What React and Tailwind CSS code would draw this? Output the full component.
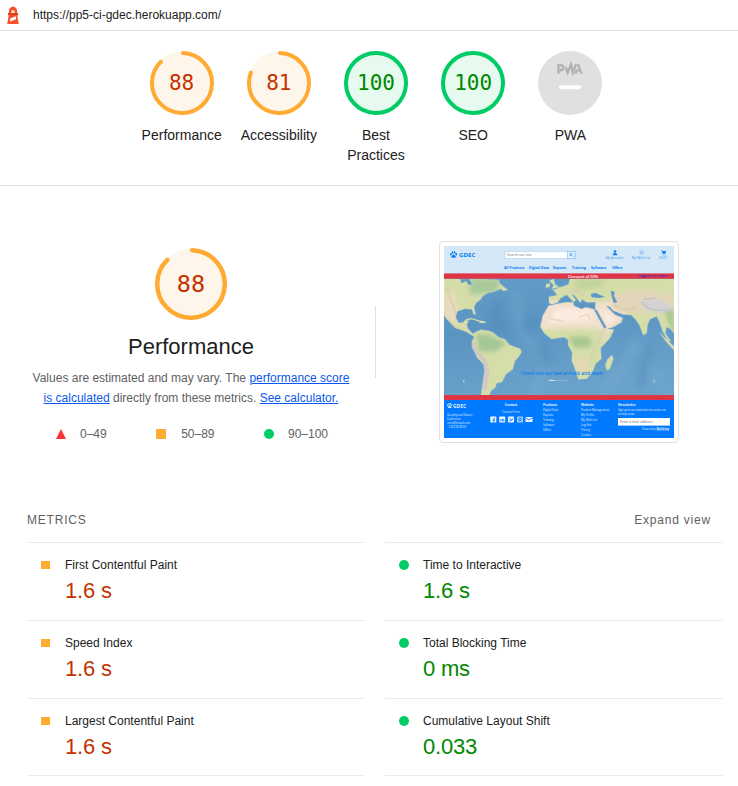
const SCORES = [
  { score: 88, label: "Performance", tone: "average" },
  { score: 81, label: "Accessibility", tone: "average" },
  { score: 100, label: "Best Practices", tone: "pass" },
  { score: 100, label: "SEO", tone: "pass" },
];

const TONES = {
  average: { ring: "#ffaa33", fill: "#fff6eb", text: "text-[#c33300]" },
  pass: { ring: "#00cc66", fill: "#e6faf0", text: "text-[#008800]" },
};

const METRICS = [
  ["First Contentful Paint", "1.6 s", "average"],
  ["Time to Interactive", "1.6 s", "pass"],
  ["Speed Index", "1.6 s", "average"],
  ["Total Blocking Time", "0 ms", "pass"],
  ["Largest Contentful Paint", "1.6 s", "average"],
  ["Cumulative Layout Shift", "0.033", "pass"],
];

function Gauge({ score, tone, size, stroke, textClass }) {
  const t = TONES[tone];
  const r = size / 2 - stroke / 2;
  const c = 2 * Math.PI * r;
  const arc = score === 100 ? c : (c * score) / 100 - stroke / 2;
  return (
    <div className="grid place-items-center">
      <svg width={size} height={size} className="col-start-1 row-start-1">
        <circle cx={size / 2} cy={size / 2} r={size / 2 - 0.5} fill={t.fill} />
        <circle
          cx={size / 2}
          cy={size / 2}
          r={r}
          fill="none"
          stroke={t.ring}
          strokeWidth={stroke}
          strokeLinecap="round"
          strokeDasharray={`${arc} ${score === 100 ? 0 : c}`}
          transform={`rotate(-88 ${size / 2} ${size / 2})`}
        />
      </svg>
      <span className={`col-start-1 row-start-1 leading-none font-['DejaVu_Sans_Mono',monospace] ${t.text} ${textClass}`}>
        {score}
      </span>
    </div>
  );
}

function Lighthouse() {
  return (
    <svg width="12" height="18" viewBox="0 0 12 18">
      <path d="M2 4.4Q2.6 1 6 .6 9.4 1 10 4.4V7h1v2.2h-.8L11.8 18H.2L1.8 9.2H1V7h1z" fill="#f4502a" />
      <path d="M4.3 4.4h3.4V7H4.3z" fill="#ffe9b8" />
      <path d="M3.2 12.6 8.8 10.2l.2 3-6.2 2.6z" fill="#fff" />
      <path d="M1 7.2h10v1.7H1z" fill="#dd3a1c" />
    </svg>
  );
}

function PwaBadge() {
  return (
    <svg width="64" height="64">
      <circle cx="32" cy="32" r="32" fill="#e0e0e0" />
      <g fill="none" stroke="#b3b3b3" strokeWidth="2.4">
        <path d="M20.4 22.7V14.2h2.3a2.5 2.5 0 0 1 0 5h-2" />
        <path d="M27.6 16 29.6 21.6 33 13.4 34.8 21.6 38.2 13" />
        <path d="M37.4 22.7 38.6 19.6h3.6M40 13.2 43.6 22.9" />
      </g>
      <path d="M23 36.2h18" stroke="#fff" strokeWidth="4" strokeLinecap="round" />
    </svg>
  );
}

function Paw({ x, y, fill }) {
  return (
    <g transform={`translate(${x} ${y})`} fill={fill}>
      <ellipse cx="1" cy="3" rx=".9" ry="1.2" />
      <ellipse cx="2.6" cy="1.2" rx=".8" ry="1.2" />
      <ellipse cx="4.6" cy="1.2" rx=".8" ry="1.2" />
      <ellipse cx="6.2" cy="3" rx=".9" ry="1.2" />
      <path d="M3.6 3 6 5.5Q6 7 3.6 6.3 1 7 1.2 5.5z" />
    </g>
  );
}

const FOOTER = [
  [99, "Products", ["Digital Data", "Reports", "Training", "Software", "Offers"]],
  [137, "Website", ["Product Management", "My Profile", "My Wish List", "Log Out", "Privacy", "Cookies"]],
];

function SitePreview() {
  return (
    <svg width="230" height="192" viewBox="0 0 230 192" className="block font-['Open_Sans',sans-serif]">
      <defs>
        <filter id="soft" x="-5%" y="-5%" width="110%" height="110%">
          <feGaussianBlur stdDeviation="1.6" />
        </filter>
        <filter id="haze" x="-20%" y="-20%" width="140%" height="140%">
          <feGaussianBlur stdDeviation="7" />
        </filter>
        <filter id="swell" x="-20%" y="-20%" width="140%" height="140%">
          <feGaussianBlur stdDeviation="13" />
        </filter>
        <clipPath id="land">
          <path id="landShape" d="M12 27H120L175 29 181 42 203 60 190 62 182 56 160 66 145 68 128 78 122 88 108 99 102 112 107 134 100 131 96 118 75 116 52 124 47 143 56 158 68 158 76 150 86 152 80 164 84 176 98 191 112 184 123 179 148 183 160 188 176 202 195 208 209 225 240 236 245 246 235 262 225 272 218 298 198 313 186 336 170 340 165 354 155 360 148 376H123L128 342 134 301 130 282 112 263 96 232 95 216 103 200 80 186 67 181 46 174 31 158 18 145 12 135zM308 138 326 107 352 101 380 97 400 97 402 107 424 117 438 112 462 118 476 146 492 175 522 179 510 204 482 234 484 266 467 281 458 305 440 326 415 328 407 302 395 271 397 248 384 224 385 210 372 201 335 207 313 190 301 170zM516 256 520 266 509 298 500 300 496 285 503 267zM327 98 327 80 351 76 346 67 339 60 360 52 385 44 390 27H702V190L690 176 679 171 676 190 692 214 684 213 668 184 660 160 650 139 630 148 623 163 620 190 610 195 597 163 585 146 573 135 548 133 520 122 510 110 498 107 525 134 548 144 544 157 522 170 498 178 482 151 466 121 466 97 440 97 426 88 421 98 412 86 402 75 395 72 408 91 400 95 380 74 362 84 352 98 335 103zM328 32 341 27 345 43 358 52 335 56 341 45zM318 43 330 40 329 50 318 53zM660 188 702 230V240L676 212z" />
        </clipPath>
        <linearGradient id="sea" x1="0" y1="0" x2=".3" y2="1">
          <stop offset="0" stopColor="#659dc7" />
          <stop offset=".45" stopColor="#5a94c1" />
          <stop offset="1" stopColor="#6aa2cb" />
        </linearGradient>
      </defs>
      <rect width="230" height="192" fill="#d5e8f7" />

      <g transform="translate(-4 24) scale(.33333)">
        <rect x="12" y="24" width="702" height="354" fill="url(#sea)" />
        <g filter="url(#swell)" fill="none" strokeWidth="24" opacity=".45">
          <path d="M225 70Q235 120 235 155T290 240T275 376M490 376Q530 310 560 270T575 205L620 280 690 376" stroke="#7aadd0" />
          <path d="M180 90 160 150 195 180M300 220 325 285M250 180 280 145M625 230 600 350" stroke="#4a83b3" />
        </g>
        <use href="#landShape" stroke="#8fbfdc" strokeWidth="5" fill="none" opacity=".35" filter="url(#soft)" />
        <g clipPath="url(#land)" filter="url(#soft)">
          <rect x="12" y="24" width="702" height="354" fill="#d5dda9" />
          <g filter="url(#haze)">
            <path d="M300 90 470 100 530 90 565 140 500 185 465 175 300 177z" fill="#f1e0cd" />
            <path d="M345 115 450 120 460 150 330 160z" fill="#fbece0" />
            <path d="M480 110 530 150 505 170z" fill="#faebdd" />
            <path d="M510 75 600 60 702 75V100L610 130 520 120z" fill="#e3d5b9" />
            <path d="M600 92 650 88 702 110 680 130 620 118z" fill="#d3d1d6" />
            <path d="M110 190 150 195 200 220 165 245 115 245z" fill="#a5c795" />
            <path d="M385 200 450 200 455 230 405 235z" fill="#a9c890" />
            <path d="M90 25 180 27 170 65 90 75z" fill="#a9c99b" />
            <path d="M12 70 40 65 60 130 50 165 12 140z" fill="#e8dabd" />
            <path d="M410 25 500 25 480 55 400 60z" fill="#c1d49b" />
            <path d="M405 270 440 265 450 300 415 310z" fill="#e7d7b4" />
            <path d="M675 120 702 120V210z" fill="#a6c78d" />
            <path d="M485 180 520 178 495 225z" fill="#e9dbbb" />
          </g>
          <path d="M98 215 107 245 134 272 143 300 134 360" stroke="#d4c8c4" strokeWidth="12" fill="none" />
          <path d="M23 40 25 75 42 110 50 145M492 180 475 215 450 265M520 105 550 120 590 115M385 65 415 62 430 78" stroke="#dacab0" strokeWidth="6" fill="none" opacity=".7" />
          <path d="M603 95 625 115 650 120 690 124M610 88 645 84" stroke="#c2c1ca" strokeWidth="4" fill="none" />
          <path d="M416 142 443 133 452 150M330 145 370 155" stroke="#eed8c6" strokeWidth="5" fill="none" />
        </g>
        <g filter="url(#soft)" fill="#5f99c4">
          <path d="M512 62 524 65 522 78 532 97 521 99 516 82zM452 72 466 68 475 73 494 80 478 84 455 82zM60 28 87 27 96 42 86 45 79 33 65 40z" />
          <path d="M467 120 497 173" stroke="#5f99c4" strokeWidth="5" />
        </g>
        <path d="M78 149Q98 143 111 151L137 157M118 158 137 158" stroke="#d6ddb0" strokeWidth="4" fill="none" filter="url(#soft)" />
      </g>

      <rect y="27.4" width="230" height="5.3" fill="#df3547" />
      <rect y="149" width="230" height="5.5" fill="#df3547" />
      <rect y="154" width="230" height="38" fill="#007bff" />

      <Paw x="6" y="5.2" fill="#087cf0" />
      <g fill="#087cf0" fontWeight="700">
        <text x="15" y="11.3" fontSize="6" textLength="16.5" lengthAdjust="spacingAndGlyphs">GDEC</text>
        <g fontSize="3.4">
          <text x="60" y="23">All Products</text>
          <text x="85" y="23">Digital Data</text>
          <text x="109" y="23">Reports</text>
          <text x="128" y="23">Training</text>
          <text x="147" y="23">Software</text>
          <text x="168" y="23">Offers</text>
        </g>
      </g>
      <rect x="61" y="5.3" width="70" height="7.4" fill="#fff" stroke="#a5cff5" strokeWidth=".6" />
      <rect x="123.5" y="5.3" width="7.5" height="7.4" fill="#e3f1fd" stroke="#7ebbf5" strokeWidth=".6" />
      <circle cx="126.8" cy="8.5" r="1.1" fill="none" stroke="#087cf0" strokeWidth=".6" />
      <path d="m127.5 9.3 1.2 1.2" stroke="#087cf0" strokeWidth=".6" />
      <text x="63" y="10.3" fontSize="3.5" fill="#777">Search our site</text>
      <g fill="#087cf0">
        <circle cx="171" cy="5.5" r="1.3" />
        <path d="M168.8 9.2V8q2.2-2 4.4 0v1.2zM217 4h1l.5 1h3.5l-.6 2.7h-2.8L218 5zM218.5 8.5h1v.8h-1zM220.8 8.5h1v.8h-1z" />
        <path d="M195.6 5h4M195.6 6.5h4M195.6 8h4" stroke="#65a9ec" strokeWidth=".6" />
        <g fontSize="3.2" opacity=".75">
          <text x="162" y="13">My Account</text>
          <text x="188" y="13">My Wish List</text>
          <text x="215" y="13">$0.00</text>
        </g>
      </g>
      <text x="124" y="31.5" fontSize="4" fill="#fff" fontWeight="600" textLength="30">Discount of 20%</text>
      <text x="194" y="31.4" fontSize="3.5" fill="#4828bd" fontWeight="600" textLength="30" lengthAdjust="spacingAndGlyphs">Logged in as admin</text>
      <text x="77" y="129.3" fontSize="4.6" fontWeight="600" fill="#0a7df0" textLength="82">Check out our last arrivals and deals</text>
      <g stroke="#c3dced" fill="none" strokeWidth=".8">
        <path d="m20.6 133.4-1.4 1.8 1.4 1.8M209.4 133.4l1.4 1.8-1.4 1.8" />
        <path d="M105 134.4h6" stroke="#fff" />
        <path d="M112 134.4h6M119 134.4h6" strokeOpacity=".5" />
      </g>

      <g transform="translate(3 157) scale(.75)">
        <Paw x="0" y="0" fill="#e0f0ff" />
      </g>
      <g fill="#e0f0ff">
        <text x="9" y="162" fontSize="5" fontWeight="700" textLength="13" lengthAdjust="spacingAndGlyphs">GDEC</text>
        <g fontSize="2.8">
          <text x="3" y="169.5">Geophysical Data n.</text>
          <text x="3" y="173.6">Cameroon</text>
          <text x="3" y="177.7">email@email.com</text>
          <text x="3" y="181.8">+1234 5678 90</text>
          <text x="67" y="166.5" textAnchor="middle">Contact Form</text>
        </g>
        <text x="67" y="160.3" fontSize="3.2" fontWeight="700" textAnchor="middle">Contact</text>
        {FOOTER.map(([x, title, links]) => (
          <g key={title}>
            <text x={x} y="160.3" fontSize="3.2" fontWeight="700">{title}</text>
            {links.map((l, i) => (
              <text key={l} x={x} y={165 + i * 4.9} fontSize="2.8">{l}</text>
            ))}
          </g>
        ))}
        <text x="174" y="160.3" fontSize="3.2" fontWeight="700">Newsletter</text>
        <text x="174" y="165" fontSize="2.8" textLength="48">Sign up to our newsletter to receive our</text>
        <text x="174" y="169.3" fontSize="2.8">weekly news</text>
        <text x="198" y="183.5" fontSize="2.8" textLength="13.5" lengthAdjust="spacingAndGlyphs">Powered by</text>
        <text x="212.5" y="183.5" fontSize="2.8" fontWeight="700" textLength="12.5" lengthAdjust="spacingAndGlyphs" textDecoration="underline">Mailchimp</text>
      </g>
      <rect x="174" y="172" width="52" height="7.6" fill="#fff" />
      <text x="176" y="177" fontSize="3.4" fill="#667">Enter e-mail address</text>
      <g fill="#f1f8ff">
        <rect x="46.3" y="170.5" width="6" height="6" rx=".8" />
        <rect x="55.2" y="170.5" width="6" height="6" rx=".8" />
        <rect x="64" y="170.5" width="6" height="6" rx=".8" />
        <rect x="73" y="170.5" width="6" height="6" rx=".8" opacity=".65" />
        <rect x="81.5" y="171" width="7" height="5" rx=".6" />
      </g>
      <g stroke="#007bff" strokeWidth=".9" fill="none">
        <path d="M49.8 176.5v-3.6q0-1 1.4-.8M48.5 174.1h2.6M56.8 173v2.5M58.5 175.5V173M58.5 174.2q1.3-1.7 1.4 0v1.3M65.4 175q2.8.5 3.4-2.6M65.4 172.5l2 1.1" />
        <circle cx="76" cy="173.5" r="1.3" />
        <path d="m81.8 172 3.2 2 3.2-2" />
      </g>
    </svg>
  );
}

function Marker({ tone }) {
  return tone === "pass" ? (
    <span className="size-2.5 shrink-0 rounded-full bg-[#00cc66]" />
  ) : (
    <span className="h-2 w-[9px] shrink-0 bg-[#ffaa33]" />
  );
}

export default function App() {
  return (
    <div className="h-[786px] w-[738px] overflow-hidden bg-white font-['Liberation_Sans',Arial,sans-serif] text-xs text-[#212121]">
      <header className="flex h-[31px] items-center gap-[14px] border-b border-[#e0e0e0] pl-[7px]">
        <Lighthouse />
        <span>https://pp5-ci-gdec.herokuapp.com/</span>
      </header>

      <section className="flex h-[155px] justify-center border-b border-[#e0e0e0] pt-5 pl-[14px]">
        <div className="grid w-[486px] grid-cols-5 text-center text-sm">
          {SCORES.map((s) => (
            <div key={s.label} className="flex flex-col items-center gap-2.5">
              <Gauge score={s.score} tone={s.tone} size={64} stroke={4} textClass="text-[21px]" />
              <span className="w-20">{s.label}</span>
            </div>
          ))}
          <div className="flex flex-col items-center gap-2.5">
            <PwaBadge />
            <span>PWA</span>
          </div>
        </div>
      </section>

      <section className="flex h-[325px] pt-[55px]">
        <div className="flex w-[375px] flex-col items-center pt-[7px] pr-[1px] pl-2">
          <Gauge score={88} tone="average" size={72} stroke={4.5} textClass="text-[23.5px] pt-0.5" />
          <h1 className="mt-3 text-[22px] leading-[30px]">Performance</h1>
          <p className="mt-1.5 w-[326px] text-center leading-5 text-[#616161]">
            Values are estimated and may vary. The{" "}
            <a className="text-[#0b57f0] underline">performance score is calculated</a> directly from these metrics.{" "}
            <a className="text-[#0b57f0] underline">See calculator.</a>
          </p>
          <div className="mt-4 ml-0.5 flex w-[272px] items-center justify-between leading-5 text-[#616161]">
            <span className="flex items-center gap-[14px]">
              <svg width="10" height="10"><path d="M5 0 10 10H0z" fill="#ff3333" /></svg>
              0–49
            </span>
            <span className="flex items-center gap-[15px]">
              <span className="size-2.5 bg-[#ffaa33]" />
              50–89
            </span>
            <span className="flex items-center gap-[14px]">
              <span className="size-2.5 rounded-full bg-[#00cc66]" />
              90–100
            </span>
          </div>
        </div>
        <div className="mt-[65px] h-[72px] w-px bg-[#e0e0e0]" />
        <div className="ml-[63px] h-[202px] w-60 rounded border border-[#e0e0e0] p-1">
          <SitePreview />
        </div>
      </section>

      <section className="pr-[15px] pl-[27px]">
        <div className="flex h-[31px] items-start justify-between pr-3 leading-[18px] text-[#616161]">
          <span className="tracking-[0.8px]">METRICS</span>
          <span className="tracking-[0.8px]">Expand view</span>
        </div>
        <div className="grid grid-cols-2 gap-x-5">
          {METRICS.map(([name, value, tone], i) => (
            <div
              key={name}
              className={`flex h-[78px] border-t border-[#ebebeb] pt-3 ${i > 3 ? "border-b" : ""}`}
            >
              <div className="flex h-5 w-[38px] items-center pl-3.5">
                <Marker tone={tone} />
              </div>
              <div>
                <div className="leading-5">{name}</div>
                <div className={`text-[22px] leading-8 tracking-[-0.2px] ${tone === "pass" ? "text-[#008800]" : "text-[#c33300]"}`}>
                  {value}
                </div>
              </div>
            </div>
          ))}
        </div>
      </section>
    </div>
  );
}
